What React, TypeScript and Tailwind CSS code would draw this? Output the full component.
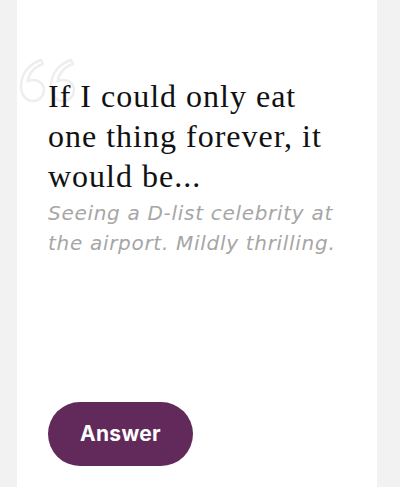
import React from 'react';

function QuoteMark() {
  return (
    <svg width="60" height="48" viewBox="0 0 60 48" fill="none" className="absolute left-[0px] top-[56px]">
      {/* outlined opening quote, very faint */}
      <path
        d="M24 4 C12 8 4 18 4 30 C4 39 9 45 16 45 C22 45 27 40 27 34 C27 28 22 24 16 24 C14 24 12 24.5 10.5 25.5 C12 17 17 11 26 8 Z"
        stroke="#eeeeee"
        strokeWidth="2.5"
        strokeLinejoin="round"
      />
      <path
        d="M54 4 C42 8 34 18 34 30 C34 39 39 45 46 45 C52 45 57 40 57 34 C57 28 52 24 46 24 C44 24 42 24.5 40.5 25.5 C42 17 47 11 56 8 Z"
        stroke="#eeeeee"
        strokeWidth="2.5"
        strokeLinejoin="round"
      />
    </svg>
  );
}

export default function App() {
  return (
    <div className="w-[400px] h-[487px] bg-[#f2f2f2] flex overflow-hidden">
      <div className="ml-[17px] w-[360px] h-full bg-white relative">
        <QuoteMark />
        <div className="relative flex flex-col items-start pl-[31px] pt-[76px] pr-2">
          <h1
            className="text-[32px] leading-[40px] text-[#111] tracking-[1px] whitespace-nowrap"
            style={{ fontFamily: '"Liberation Serif", "DejaVu Serif", serif' }}
          >
            If I could only eat
            <br />
            one thing forever, it
            <br />
            would be...
          </h1>
          <p
            className="mt-[2px] text-[20px] leading-[30px] italic text-[#a6a6a6] tracking-[0.7px] whitespace-nowrap"
            style={{ fontFamily: '"DejaVu Sans", sans-serif' }}
          >
            Seeing a D-list celebrity at
            <br />
            the airport. Mildly thrilling.
          </p>
          <button
            className="mt-[144px] w-[145px] h-[64px] rounded-full bg-[#62295b] text-white text-[21px] font-bold tracking-[0.3px]"
            style={{ fontFamily: 'Inter, "Liberation Sans", sans-serif' }}
          >
            Answer
          </button>
        </div>
      </div>
    </div>
  );
}
